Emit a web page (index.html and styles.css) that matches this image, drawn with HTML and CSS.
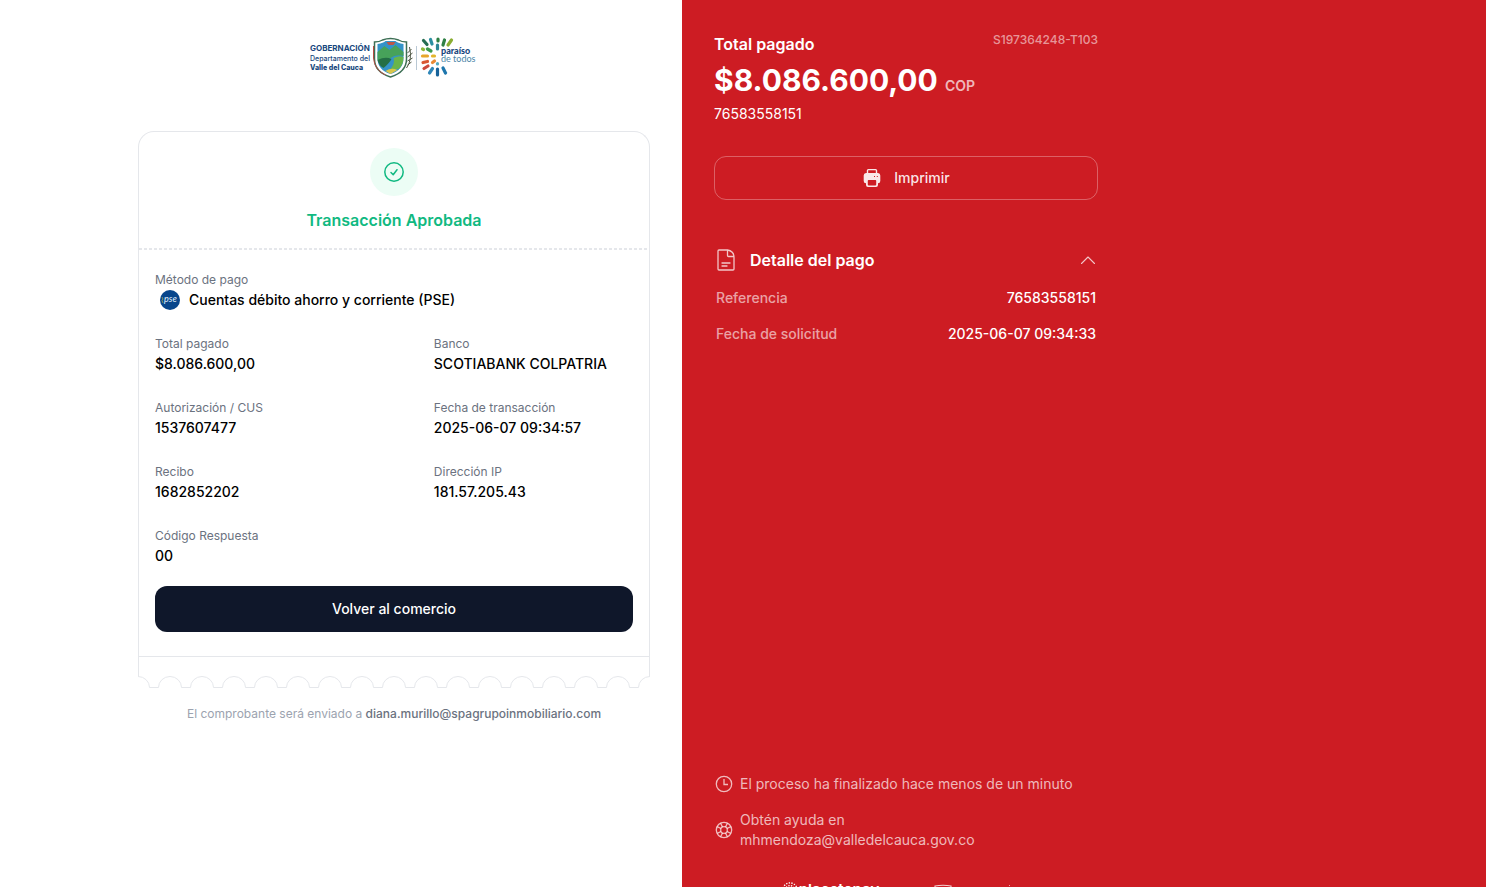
FILE: index.html
```html
<!DOCTYPE html>
<html lang="es">
<head>
<meta charset="utf-8">
<title>Transacción Aprobada</title>
<link rel="stylesheet" href="styles.css">
</head>
<body>
<div class="page">
  <main class="receipt-side">
    <svg class="brand" width="170" height="44" viewBox="0 0 170 44" role="img" aria-label="Gobernación Valle del Cauca">
      <g class="brand-text" fill="#17477d">
        <text x="1" y="15" font-size="8" font-weight="700">GOBERNACIÓN</text>
        <text x="1" y="25" font-size="7" font-weight="500">Departamento del</text>
        <text x="1" y="34" font-size="7" font-weight="800">Valle del Cauca</text>
      </g>
      <g transform="translate(-1.500 0)">
        <path d="M67 6Q72 6 75 4Q83 1 91 4Q94 6 99 6V23Q99 36 83 41Q67 36 67 23Z" fill="#fff" stroke="#3d6f55" stroke-width="1.500"/>
        <path d="M70 8Q76 7 78 5H88Q90 7 96 8V22Q96 34 83 38Q70 34 70 22Z" fill="#3493c8"/>
        <path d="M70 16L77 10L82 14L88 9L96 16V20Q88 18 83 22T70 24Z" fill="#47a25a"/>
        <path d="M70 24Q78 20 84 23Q82 27 76 32Q71 29 70 24Z" fill="#246f45"/>
        <path d="M86 22Q92 19 96 21Q96 29 91 33L82 34Q88 28 86 22Z" fill="#69b54b"/>
        <path d="M78 35Q84 31 90 34L83 38Z" fill="#d9c54a"/>
        <path d="M79 6H88L86 9H81Z" fill="#bd5647"/>
        <path d="M66 10V22Q67 34 78 39" fill="none" stroke="#b64b43"/>
        <path d="M99 32Q105 24 102 11M100 29L104 26M100 25L105 22M100 21L105 17M100 17L104 13" fill="none" stroke="#4d5542"/>
        <path d="M109 10V34" stroke="#b9c8d4"/>
      </g>
      <g stroke-width="3.200" stroke-linecap="round">
        <path d="M128.500 9V13" stroke="#2b8796"/>
        <path d="M121.500 3.500L123 8" stroke="#2b8fa0"/>
        <path d="M129 3V5" stroke="#2d7f42"/>
        <path d="M135.500 4L134 9" stroke="#2f8146"/>
        <path d="M142.500 4L139 9" stroke="#8aad32"/>
        <path d="M114.500 4.500L118 8.500" stroke="#246c51"/>
        <path d="M118.500 13L122 15" stroke="#3c9a4c"/>
        <path d="M113.500 13L114.500 13.500" stroke="#8db83a"/>
        <path d="M113.500 20H118.500" stroke="#e8a62c"/>
        <path d="M123.500 20H125.500" stroke="#e2b52c"/>
        <path d="M114 26.500L118.500 25.500" stroke="#d95732"/>
        <path d="M123.500 26.500L125.500 25" stroke="#e98a35"/>
        <path d="M115 32.500L119 30" stroke="#cc493c"/>
        <path d="M120.500 37L123.500 32.500" stroke="#2f86b8"/>
        <path d="M128.500 33V39" stroke="#176299"/>
        <path d="M136.500 37L134 32" stroke="#1e76ad"/>
        <path d="M128.500 27.500V28" stroke="#53aac0"/>
      </g>
      <g class="slogan-text">
        <text x="132" y="18" font-size="9" font-weight="900" fill="#17477d">paraíso</text>
        <text x="132" y="26" font-size="9" fill="#4b86a8">de todos</text>
      </g>
    </svg>

    <section class="ticket">
      <header class="ticket-head">
        <span class="status-icon">
          <svg width="24" height="24" viewBox="0 0 24 24" fill="none" stroke="#10b981" stroke-width="1.500" stroke-linecap="round" stroke-linejoin="round" aria-hidden="true">
            <circle cx="12" cy="12" r="9.200"/><path d="M9 12.500L11.200 14.700L15 9.700"/>
          </svg>
        </span>
        <h1 class="status-title">Transacción Aprobada</h1>
      </header>
      <div class="ticket-body">
        <dl class="facts">
          <div class="fact fact-wide">
            <dt>Método de pago</dt>
            <dd class="method">
              <svg width="20" height="20" viewBox="0 0 20 20" role="img" aria-label="PSE">
                <circle cx="10" cy="10" r="10" fill="#07468c"/>
                <path d="M2 7L3 9L2 10.500L3 13" fill="none" stroke="#a9a94d" stroke-width=".8"/>
                <text class="pse-text" x="4" y="12" font-size="9" fill="#d9e8f7">pse</text>
              </svg>
              Cuentas débito ahorro y corriente (PSE)
            </dd>
          </div>
          <div class="fact"><dt>Total pagado</dt><dd>$8.086.600,00</dd></div>
          <div class="fact"><dt>Banco</dt><dd>SCOTIABANK COLPATRIA</dd></div>
          <div class="fact"><dt>Autorización / CUS</dt><dd>1537607477</dd></div>
          <div class="fact"><dt>Fecha de transacción</dt><dd>2025-06-07 09:34:57</dd></div>
          <div class="fact"><dt>Recibo</dt><dd>1682852202</dd></div>
          <div class="fact"><dt>Dirección IP</dt><dd>181.57.205.43</dd></div>
          <div class="fact"><dt>Código Respuesta</dt><dd>00</dd></div>
        </dl>
        <button class="return-button" type="button">Volver al comercio</button>
      </div>
      <div class="ticket-stub"></div>
    </section>
    <svg class="scallops" width="100%" height="12" aria-hidden="true">
      <defs>
        <pattern id="scallop" width="32" height="12" patternUnits="userSpaceOnUse">
          <path d="M0 .5A11.500 11 0 0 1 11.500 11.500H20.500A11.500 11 0 0 1 32 .5" fill="none" stroke="#e5e7eb"/>
        </pattern>
      </defs>
      <rect width="100%" height="12" fill="url(#scallop)"/>
    </svg>
    <p class="mail-note">El comprobante será enviado a <strong>diana.murillo@spagrupoinmobiliario.com</strong></p>
  </main>

  <aside class="summary-side">
    <div class="summary">
      <div class="summary-top">
        <h2 class="summary-title">Total pagado</h2>
        <span class="session">S197364248-T103</span>
      </div>
      <p class="amount">$8.086.600,00 <span class="currency">COP</span></p>
      <p class="reference">76583558151</p>
      <button class="print-button" type="button">
        <svg width="20" height="20" viewBox="0 0 20 20" aria-hidden="true">
          <path d="M5.500 5V2.500Q5.500 1.600 6.400 1.600H13.600Q14.500 1.600 14.500 2.500V5" fill="none" stroke="currentColor" stroke-width="1.400"/>
          <path fill="currentColor" fill-rule="evenodd" d="M4 5H16Q18.300 5 18.300 7.500V13Q18.300 15.300 16 15.300V17Q16 19 14 19H6Q4 19 4 17V15.300Q1.700 15.300 1.700 13V7.500Q1.700 5 4 5ZM6.500 12Q5.800 12 5.800 12.700V16.500Q5.800 17.500 6.800 17.500H13.200Q14.200 17.500 14.200 16.500V12.700Q14.200 12 13.500 12ZM12 8V9H13V8ZM14.800 8V9H15.800V8Z"/>
        </svg>
        Imprimir
      </button>

      <section class="details">
        <button class="details-toggle" type="button" aria-expanded="true">
          <svg width="20" height="24" viewBox="0 0 20 24" fill="none" stroke="currentColor" stroke-width="1.300" stroke-linecap="round" stroke-linejoin="round" aria-hidden="true">
            <path d="M3 2H11.500Q18 3 18 9.500V21Q18 22 17 22H3Q2 22 2 21V3Q2 2 3 2ZM11.500 2V7.500Q11.500 8.500 12.500 8.500H18M6 15H14M6 18H11"/>
          </svg>
          <span class="details-title">Detalle del pago</span>
          <svg width="16" height="16" viewBox="0 0 16 16" fill="none" stroke="currentColor" stroke-width="1.100" stroke-linecap="round" stroke-linejoin="round" aria-hidden="true"><path d="M1.500 11.500L8 5L14.500 11.500"/></svg>
        </button>
        <dl class="detail-list">
          <div class="detail"><dt>Referencia</dt><dd>76583558151</dd></div>
          <div class="detail"><dt>Fecha de solicitud</dt><dd>2025-06-07 09:34:33</dd></div>
        </dl>
      </section>

      <footer class="help">
        <p class="help-row">
          <svg width="20" height="20" viewBox="0 0 20 20" fill="none" stroke="currentColor" stroke-width="1.300" aria-hidden="true"><circle cx="10" cy="10" r="7.700"/><path d="M10 5V10.500H14"/></svg>
          <span>El proceso ha finalizado hace menos de un minuto</span>
        </p>
        <p class="help-row">
          <svg width="20" height="20" viewBox="0 0 20 20" fill="none" stroke="currentColor" stroke-width="1.300" aria-hidden="true">
            <circle cx="10" cy="10" r="7.700"/><circle cx="10" cy="10" r="3.300"/>
            <path d="M8.500 7L6.600 3.200M7 8.500L3.200 6.600M11.500 7L13.400 3.200M13 8.500L16.800 6.600M8.500 13L6.600 16.800M7 11.500L3.200 13.400M11.500 13L13.400 16.800M13 11.500L16.800 13.400"/>
          </svg>
          <span>Obtén ayuda en<br>mhmendoza@valledelcauca.gov.co</span>
        </p>
        <div class="partners">
          <span class="partner">
            <svg width="16" height="16" viewBox="0 0 18 18" fill="none" stroke="currentColor" aria-hidden="true">
              <circle cx="9" cy="9" r="8" stroke-width="1.500" stroke-dasharray="1.500 1.500"/><circle cx="9" cy="9" r="5" stroke-width="1.500" stroke-dasharray="1.500 1.500"/>
            </svg>
            placetopay
          </span>
          <svg class="badge-icon" width="96" height="18" viewBox="0 0 96 18" fill="none" stroke="currentColor" aria-hidden="true">
            <path d="M1 4V2Q9 .5 17 2V4M2 4V14Q9 19 16 14V4" stroke-width="1.100" opacity=".8"/><path d="M75 1.500H76" opacity=".6"/>
          </svg>
        </div>
      </footer>
    </div>
  </aside>
</div>
</body>
</html>
```
FILE: styles.css
```css
* { box-sizing: border-box; }

body, h1, h2, p, dl, dd { margin: 0; }

body {
  font-family: Inter, "Liberation Sans", sans-serif;
  font-size: 14px;
  line-height: 20px;
  color: #000;
  background: #fff;
}

button {
  font: inherit;
  cursor: pointer;
}

svg { flex: none; }

.page {
  display: grid;
  grid-template-columns: calc(50% - 61px) 1fr;
  height: 100vh;
  overflow: hidden;
}

/* Receipt */
.receipt-side {
  display: flex;
  flex-direction: column;
  width: 100%;
  max-width: 576px;
  margin-left: auto;
  padding: 36px 32px 32px;
}

.brand {
  align-self: center;
  margin-bottom: 51px;
}

.brand-text { font-family: Inter, sans-serif; }

.slogan-text { font-family: Lato, sans-serif; }

.ticket {
  border: 1px solid #e5e7eb;
  border-bottom: 0;
  border-radius: 16px 16px 0 0;
}

.ticket-head {
  display: flex;
  flex-direction: column;
  align-items: center;
  gap: 12px;
  padding: 16px 16px 18px;
  background: repeating-linear-gradient(90deg, #e5e7eb 0 3px, transparent 3px 5px) bottom / 100% 2px no-repeat;
}

.status-icon {
  display: flex;
  align-items: center;
  justify-content: center;
  width: 48px;
  height: 48px;
  border-radius: 50%;
  background: #ecfdf5;
}

.status-title {
  font-size: 16px;
  line-height: 24px;
  font-weight: 600;
  color: #10b981;
}

.ticket-body { padding: 20px 16px 24px; }

.facts {
  display: grid;
  grid-template-columns: 7fr 5fr;
  row-gap: 24px;
}

.fact-wide { grid-column: 1 / -1; }

.fact dt {
  font-size: 12px;
  color: #6b7280;
}

.fact dd { font-weight: 500; }

.method {
  display: flex;
  align-items: center;
  gap: 9px;
  padding-left: 5px;
}

.pse-text { font-style: italic; font-family: Lato, sans-serif; }

.return-button {
  width: 100%;
  margin-top: 20px;
  padding: 13px 16px;
  border: 0;
  border-radius: 12px;
  background: #0f172a;
  color: #fff;
  font-weight: 500;
}

.ticket-stub {
  height: 20px;
  border-top: 1px solid #e5e7eb;
}

.scallops { display: block; }

.mail-note {
  margin-top: 16px;
  text-align: center;
  font-size: 12px;
  color: #9ca3af;
}

.mail-note strong {
  font-weight: 500;
  color: #6b7280;
}

/* Summary */
.summary-side {
  background: #cd1c23;
  color: #fff;
}

.summary {
  display: flex;
  flex-direction: column;
  width: 100%;
  max-width: 448px;
  height: calc(100vh + 47px);
  padding: 32px;
}

.summary-top {
  display: flex;
  justify-content: space-between;
}

.summary-title, .details-title {
  font-size: 16px;
  line-height: 24px;
  font-weight: 600;
}

.session {
  font-size: 12px;
  line-height: 16px;
  font-weight: 500;
  color: rgba(255, 255, 255, .55);
}

.amount {
  margin-top: 6px;
  font-size: 30px;
  line-height: 36px;
  font-weight: 700;
}

.currency {
  font-size: 14px;
  line-height: 20px;
  font-weight: 600;
  color: rgba(255, 255, 255, .7);
}

.reference { margin-top: 6px; }

.print-button {
  display: flex;
  align-items: center;
  justify-content: center;
  gap: 12px;
  margin-top: 32px;
  padding: 11px 16px;
  border: 1px solid rgba(255, 255, 255, .3);
  border-radius: 12px;
  background: transparent;
  color: rgba(255, 255, 255, .9);
  font-weight: 500;
}

.details {
  margin-top: 48px;
  padding: 0 2px;
}

.details-toggle {
  display: flex;
  align-items: center;
  gap: 14px;
  width: 100%;
  padding: 0;
  border: 0;
  background: transparent;
  color: rgba(255, 255, 255, .75);
  text-align: left;
}

.details-title {
  flex: 1;
  color: #fff;
}

.detail-list {
  display: grid;
  gap: 16px;
  margin-top: 16px;
}

.detail {
  display: flex;
  justify-content: space-between;
  font-weight: 500;
}

.detail dt { color: rgba(255, 255, 255, .6); }

.help {
  display: grid;
  gap: 16px;
  margin-top: auto;
  color: rgba(255, 255, 255, .7);
}

.help-row {
  display: flex;
  align-items: center;
  gap: 6px;
}

.partners {
  display: flex;
  justify-content: center;
  gap: 55px;
  margin-top: 11px;
  color: #fff;
}

.partner {
  display: flex;
  align-items: center;
  gap: 1px;
  font-size: 15px;
  line-height: 24px;
  font-weight: 600;
}

.badge-icon { margin-top: 7px; }
```
